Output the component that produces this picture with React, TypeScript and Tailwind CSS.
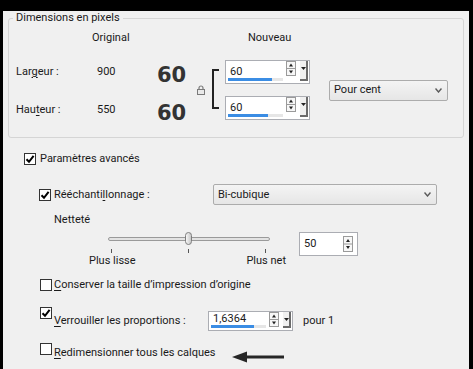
import type { ReactNode } from "react"

function Check({ checked }: { checked?: boolean }) {
  return (
    <div className="flex h-[12px] w-[12px] shrink-0 items-center justify-center border border-[#333333] bg-white">
      {checked && (
        <svg width="10" height="10" viewBox="0 0 10 10">
          <path d="M1.5 5.2 L4 7.8 L8.6 1.8" fill="none" stroke="#000" strokeWidth="2" />
        </svg>
      )}
    </div>
  )
}

function Arrows({ h = 15 }: { h?: number }) {
  return (
    <svg width="10" height={h} viewBox={`0 0 10 ${h}`} className="shrink-0">
      <rect x="0.5" y="0.5" width="9" height={h - 1} fill="#f7f7f7" stroke="#9a9a9a" />
      <line x1="0.5" y1={h / 2} x2="9.5" y2={h / 2} stroke="#9a9a9a" />
      <path d={`M3 ${h / 2 - 2} L5 ${h / 2 - 5} L7 ${h / 2 - 2} Z`} fill="#222" />
      <path d={`M3 ${h / 2 + 2} L5 ${h / 2 + 5} L7 ${h / 2 + 2} Z`} fill="#222" />
    </svg>
  )
}

function MiniMenu({ h = 20 }: { h?: number }) {
  return (
    <div
      className="flex w-[8px] shrink-0 items-start justify-center border-r-2 border-b-2 border-r-[#6b6b6b] border-b-[#6b6b6b] bg-[#f0f0f0] pt-[6px]"
      style={{ height: h }}
    >
      <svg width="5" height="3" viewBox="0 0 5 3">
        <path d="M0 0 L5 0 L2.5 3 Z" fill="#222" />
      </svg>
    </div>
  )
}

function Spin({
  value,
  w,
  h,
  track,
  fill,
  menu,
}: {
  value: string
  w: number
  h: number
  track?: number
  fill?: number
  menu?: boolean
}) {
  return (
    <div className="flex border border-[#abadb3] bg-white" style={{ width: w, height: h }}>
      <div className="flex flex-1 flex-col justify-end">
        <div className={track ? "pl-[4px] leading-[13px]" : "pl-[4px] leading-[14px] pb-[4px]"}>{value}</div>
        {track ? (
          <div className="mb-[2px] ml-[2px] h-[3px] bg-[#e6e6e6]" style={{ width: track }}>
            <div className="h-full bg-[#3b8de4]" style={{ width: fill }} />
          </div>
        ) : null}
      </div>
      <div className={menu ? "mr-[1px] flex gap-[4px]" : "mr-[4px] flex items-center"}>
        <Arrows h={menu ? Math.min(15, h - 5) : 16} />
        {menu && <MiniMenu h={h - 4} />}
      </div>
    </div>
  )
}

function Combo({ label, w, h }: { label: string; w: number; h: number }) {
  return (
    <div
      className="flex items-center justify-between rounded-[2px] border border-[#acacac] bg-gradient-to-b from-[#f4f4f4] to-[#e6e6e6] pl-[4px] pr-[5px]"
      style={{ width: w, height: h }}
    >
      <span>{label}</span>
      <svg width="7" height="5" viewBox="0 0 7 5">
        <path d="M0.5 0.5 L3.5 4 L6.5 0.5" fill="none" stroke="#5a5a5a" strokeWidth="1.4" />
      </svg>
    </div>
  )
}

function U({ children }: { children: ReactNode }) {
  return <span className="underline underline-offset-2">{children}</span>
}

export default function App() {
  return (
    <div className="h-[369px] w-[473px] bg-black pt-[3px] pl-[3px] pr-[4px] pb-[3px]">
      <div className="h-full bg-[#f0f0f0] font-['Roboto',sans-serif] text-[11px] text-[#1a1a1a]">
        <fieldset className="mx-[5px] mt-[8px] h-[127px] rounded-[3px] border border-[#d5d5d5]">
          <legend className="ml-[4px] px-[3px] leading-[14px]">Dimensions en pixels</legend>
          <div className="pl-[7px] pt-[6px]">
            <div className="flex leading-[14px]">
              <span className="w-[76px]" />
              <span className="w-[156px]">Original</span>
              <span>Nouveau</span>
            </div>
            <div className="mt-[15px] grid grid-cols-[76px_65px_38px_15px_15px_85px_138px] grid-rows-[24px_24px] gap-y-[12px] items-center">
              <div>
                Lar<U>g</U>eur :
              </div>
              <div className="pl-[5px]">900</div>
              <div className="pt-[5px] font-['DejaVu_Sans',sans-serif] text-[21px] font-bold leading-[24px] text-[#333]">60</div>
              <div className="row-span-2 self-center pl-[2px]">
                <svg width="8" height="10" viewBox="0 0 8 10">
                  <path d="M2 4.5 V3 a2 2 0 0 1 4 0 V4.5" fill="none" stroke="#7a7a7a" strokeWidth="1.2" />
                  <rect x="0.5" y="4.5" width="7" height="5" fill="#e9e9e9" stroke="#7a7a7a" />
                </svg>
              </div>
              <div className="row-span-2 self-start pl-[2px] pt-[9px]">
                <div className="h-[40px] w-[7px] border-l-2 border-t-2 border-b-2 border-[#222]" />
              </div>
              <Spin value="60" w={85} h={24} track={55} fill={44} menu />
              <div className="row-span-2 self-center pl-[19px]">
                <Combo label="Pour cent" w={119} h={21} />
              </div>
              <div className="pt-[5px]">
                Hau<U>t</U>eur :
              </div>
              <div className="pl-[5px] pt-[5px]">550</div>
              <div className="pt-[9px] font-['DejaVu_Sans',sans-serif] text-[21px] font-bold leading-[24px] text-[#333]">60</div>
              <Spin value="60" w={85} h={24} track={55} fill={40} menu />
            </div>
          </div>
        </fieldset>

        <div className="flex flex-col pl-[21px] leading-[14px]">
          <div className="mt-[15px] flex h-[12px] items-center gap-[4px]">
            <Check checked />
            <span>Paramètres avancés</span>
          </div>

          <div className="mt-[19px] flex h-[21px] items-center pl-[15px]">
            <Check checked />
            <span className="ml-[3px] w-[159px]">
              Rééchanti<U>l</U>lonnage :
            </span>
            <Combo label="Bi-cubique" w={224} h={21} />
          </div>

          <div className="mt-[8px] pl-[30px]">Netteté</div>

          <div className="mt-[5px] flex items-start">
            <div className="ml-[65px] flex w-[197px] flex-col">
              <div className="relative ml-[19px] h-[13px] w-[162px]">
                <div className="mt-[5px] h-[4px] rounded-full border border-[#9a9a9a] bg-[#e3e3e3]" />
                <div className="absolute left-[77px] top-0 h-[13px] w-[7px] rounded-full border border-[#7d7d7d] bg-gradient-to-r from-[#f6f6f6] to-[#c8c8c8]" />
              </div>
              <div className="mt-[4px] ml-[22px] mr-[20px] flex h-[4px] justify-between">
                <div className="w-px bg-[#555]" />
                <div className="w-px bg-[#555]" />
                <div className="w-px bg-[#555]" />
              </div>
              <div className="mt-[1px] flex justify-between">
                <span>Plus lisse</span>
                <span>Plus net</span>
              </div>
            </div>
            <div className="ml-[13px]">
              <Spin value="50" w={59} h={24} />
            </div>
          </div>

          <div className="mt-[10px] flex h-[13px] items-center pl-[16px]">
            <Check />
            <span className="ml-[2px]">
              <U>C</U>onserver la taille d’impression d’origine
            </span>
          </div>

          <div className="mt-[16px] flex items-start pl-[16px]">
            <Check checked />
            <div className="ml-[2px] mt-[4px] flex items-center">
              <span className="w-[154px]">
                <U>V</U>errouiller les proportions :
              </span>
              <Spin value="1,6364" w={85} h={20} track={55} fill={43} menu />
              <span className="ml-[10px]">pour 1</span>
            </div>
          </div>

          <div className="mt-[12px] flex items-start pl-[16px]">
            <Check />
            <span className="ml-[2px] mt-[3px] w-[178px]">
              <U>R</U>edimensionner tous les calques
            </span>
            <svg width="52" height="12" viewBox="0 0 52 12" className="mt-[8px]">
              <path d="M0 6 L15 0.5 L15 11.5 Z" fill="#262626" />
              <rect x="13" y="4.5" width="39" height="3" fill="#262626" />
            </svg>
          </div>
        </div>
      </div>
    </div>
  )
}
